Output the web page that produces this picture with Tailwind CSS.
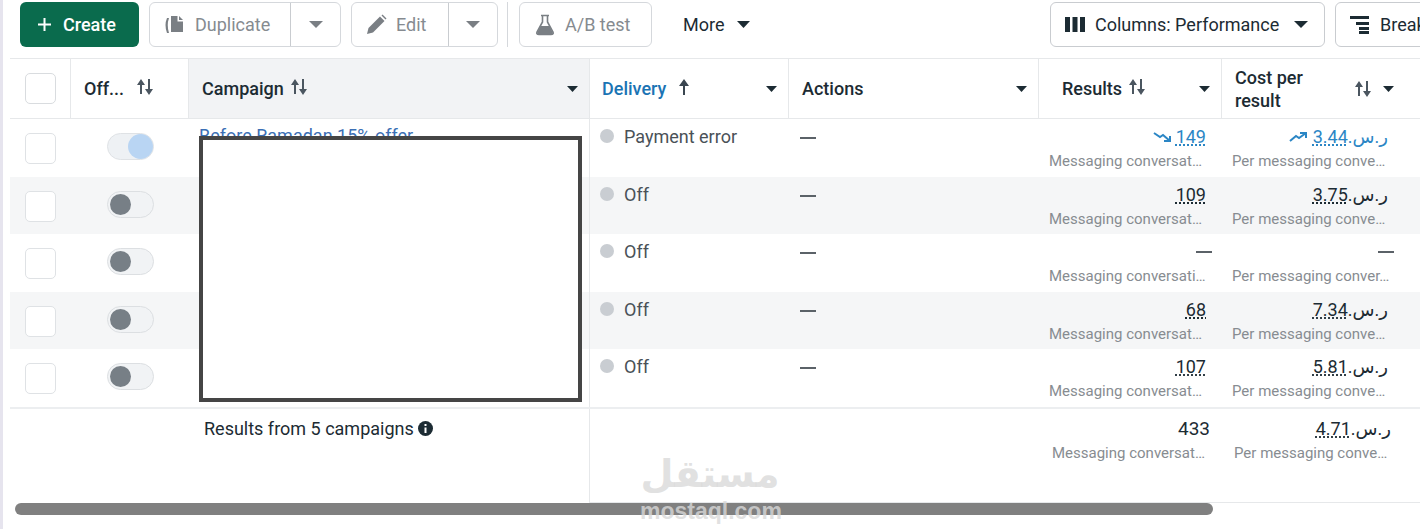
<!DOCTYPE html>
<html lang="en">
  <head>
    <meta charset="UTF-8" />
    <title>Campaigns</title>
    <script src="https://cdn.jsdelivr.net/npm/@tailwindcss/browser@4"></script>
  </head>
  <body class="bg-white">
    <div class="relative w-[1420px] h-[529px] overflow-hidden bg-white font-['Roboto','DejaVu_Sans',sans-serif] text-[#1c2b33] text-[18px] border-l-[3px] border-[#e6e4ee]">
      <!-- toolbar -->
      <div class="flex items-center h-[58px] pl-[17px] pb-[9px] gap-[10px] whitespace-nowrap">
        <button class="flex items-center gap-[11px] w-[119px] h-[45px] pl-[17px] rounded-[6px] bg-[#0a6b4d] text-white font-medium">
          <svg width="15" height="15" viewBox="0 0 15 15"><path d="M7.5 1v13M1 7.5h13" stroke="#fff" stroke-width="2"/></svg>
          Create
        </button>
        <div class="flex h-[45px] w-[192px] rounded-[6px] border border-[#d5d8dc] text-[#868b90]">
          <div class="flex items-center gap-[8px] w-[141px] pl-[13px] border-r border-[#c9ccd0]">
            <svg width="24" height="20" viewBox="0 0 24 20" fill="#7a7f84"><path d="M4 3 Q1 10 4 18 L6 18 Q3.500 10 6 3Z"/><path d="M8 1h6.500v5.500H20V17H8Z"/><path d="M16 1l4 4h-4Z"/></svg>
            Duplicate
          </div>
          <div class="flex items-center justify-center flex-1">
            <svg width="14" height="7" viewBox="0 0 14 7" fill="#7a7f84"><path d="M0 0h14L7 7Z"/></svg>
          </div>
        </div>
        <div class="flex h-[45px] w-[147px] rounded-[6px] border border-[#d5d8dc] text-[#868b90]">
          <div class="flex items-center gap-[9px] w-[97px] pl-[14px] border-r border-[#c9ccd0]">
            <svg width="21" height="21" viewBox="0 0 21 21" fill="#7a7f84"><path d="M1 20l1.500-6L14 2.500l4.500 4.500L7 18.500Z"/><path d="M15.500 1.500l1-1 4 4-1 1Z"/></svg>
            Edit
          </div>
          <div class="flex items-center justify-center flex-1">
            <svg width="14" height="7" viewBox="0 0 14 7" fill="#7a7f84"><path d="M0 0h14L7 7Z"/></svg>
          </div>
        </div>
        <div class="w-px h-[45px] bg-[#d5d8dc] ml-[-1px]"></div>
        <div class="flex items-center gap-[10px] h-[45px] w-[133px] ml-[1px] pl-[15px] rounded-[6px] border border-[#d5d8dc] text-[#868b90]">
          <svg width="20" height="22" viewBox="0 0 20 22" fill="none"><path d="M6 1.500h8M7.500 2v6L2 18q-1 2.500 2 2.500h12q3 0 2-2.500L12.500 8V2" stroke="#7a7f84" stroke-width="1.600"/><path d="M5.500 12h9L18 19q0 1.500-2 1.500H4Q2 20.500 2 19Z" fill="#7a7f84"/></svg>
          A/B test
        </div>
        <div class="flex items-center gap-[13px] ml-[21px]">
          More
          <svg width="13" height="7" viewBox="0 0 13 7" fill="#1c2b33"><path d="M0 0h13L6.500 7Z"/></svg>
        </div>
        <div class="flex items-center gap-[10px] h-[45px] w-[275px] ml-auto pl-[14px] rounded-[6px] border border-[#c9ccd0] shrink-0">
          <svg width="20" height="15" viewBox="0 0 20 15" fill="#1c2b33"><path d="M0 0h5v15H0zM7.500 0h5v15h-5zM15 0h5v15h-5z"/></svg>
          Columns: Performance
          <svg class="ml-[5px]" width="14" height="7" viewBox="0 0 14 7" fill="#1c2b33"><path d="M0 0h14L7 7Z"/></svg>
        </div>
        <div class="flex items-center gap-[11px] h-[45px] w-[100px] mr-[-15px] pl-[14px] rounded-[6px] border border-[#c9ccd0] shrink-0 overflow-hidden">
          <svg class="shrink-0" width="19" height="18" viewBox="0 0 19 18" fill="#1c2b33"><path d="M0 0h19v3H0zM6 6h13v3H6zM9 11h10v3H9zM9 15h10v3H9z"/></svg>
          Breakdown
        </div>
      </div>

      <!-- table header -->
      <div class="ml-[7px] grid grid-cols-[61px_118px_401px_199px_250px_183px_198px] h-[61px] border-y border-[#e6e8ea] font-medium text-[#1c2b33]">
        <div class="flex items-center pl-[15px] border-r border-[#e6e8ea]">
          <div class="w-[31px] h-[31px] rounded-[5px] border border-[#d9dcdf] bg-white"></div>
        </div>
        <div class="flex items-center gap-[12px] pl-[13px] border-r border-[#e6e8ea]">
          Off...
          <svg class="mb-[3px]" width="18" height="16" viewBox="0 0 18 16" fill="#4b5660"><path d="M4 15V5H6V15ZM5 0 9 6H1ZM12 0H14V10H12ZM13 16 9 10H17Z"/></svg>
        </div>
        <div class="flex items-center gap-[6px] pl-[13px] pr-[11px] bg-[#f2f3f5] border-r border-[#e6e8ea]">
          Campaign
          <svg class="mb-[3px]" width="18" height="16" viewBox="0 0 18 16" fill="#4b5660"><path d="M4 15V5H6V15ZM5 0 9 6H1ZM12 0H14V10H12ZM13 16 9 10H17Z"/></svg>
          <svg class="ml-auto" width="11" height="6" viewBox="0 0 11 6" fill="#1c2b33"><path d="M0 0h11L5.500 6Z"/></svg>
        </div>
        <div class="flex items-center gap-[12px] pl-[12px] pr-[11px] text-[#1b74b4] border-r border-[#e6e8ea]">
          Delivery
          <svg class="mb-[3px]" width="12" height="16" viewBox="0 0 12 16" fill="#3a4650"><path d="M5 16V5H7V16ZM6 0 11 7H1Z"/></svg>
          <svg class="ml-auto" width="11" height="6" viewBox="0 0 11 6" fill="#1c2b33"><path d="M0 0h11L5.500 6Z"/></svg>
        </div>
        <div class="flex items-center pl-[13px] pr-[11px] border-r border-[#e6e8ea]">
          Actions
          <svg class="ml-auto" width="11" height="6" viewBox="0 0 11 6" fill="#1c2b33"><path d="M0 0h11L5.500 6Z"/></svg>
        </div>
        <div class="flex items-center gap-[6px] pl-[23px] pr-[11px] border-r border-[#e6e8ea]">
          Results
          <svg class="mb-[3px]" width="18" height="16" viewBox="0 0 18 16" fill="#4b5660"><path d="M4 15V5H6V15ZM5 0 9 6H1ZM12 0H14V10H12ZM13 16 9 10H17Z"/></svg>
          <svg class="ml-auto" width="11" height="6" viewBox="0 0 11 6" fill="#1c2b33"><path d="M0 0h11L5.500 6Z"/></svg>
        </div>
        <div class="flex items-center pl-[13px] pr-[26px] leading-[23px]">
          <span>Cost per<br />result</span>
          <svg class="ml-auto mr-[11px]" width="18" height="16" viewBox="0 0 18 16" fill="#4b5660"><path d="M4 15V5H6V15ZM5 0 9 6H1ZM12 0H14V10H12ZM13 16 9 10H17Z"/></svg>
          <svg width="11" height="6" viewBox="0 0 11 6" fill="#1c2b33"><path d="M0 0h11L5.500 6Z"/></svg>
        </div>
      </div>

      <!-- rows -->
      <div id="rows" class="ml-[7px]"></div>

      <!-- summary -->
      <div class="ml-[7px] grid grid-cols-[61px_118px_401px_199px_250px_183px_198px] h-[96px] border-t-2 border-[#eceef0]">
        <div></div>
        <div></div>
        <div class="pl-[15px] pt-[6px] border-r border-[#e6e8ea]">
          <div class="flex items-center gap-[4px] h-[27px]">
            Results from 5 campaigns
            <svg width="15" height="15" viewBox="0 0 15 15"><circle cx="7.500" cy="7.500" r="7.500" fill="#1c2b33"/><path d="M6.500 6.500h2v5.500h-2zM6.500 3h2v2h-2z" fill="#fff"/></svg>
          </div>
        </div>
        <div class="border-b border-[#e6e8ea]"></div>
        <div class="border-b border-[#e6e8ea]"></div>
        <div class="pt-[8px] pr-[12px] pl-[13px] border-b border-[#e6e8ea]">
          <div class="leading-[24px] text-[19px] text-right">433</div>
          <div class="leading-[24px] text-[15px] text-[#878c91] whitespace-nowrap">Messaging conversat…</div>
        </div>
        <div class="pt-[8px] pr-[29px] pl-[12px] border-b border-[#e6e8ea]">
          <div class="flex justify-end items-baseline leading-[24px]"><span class="underline decoration-dotted underline-offset-2">4.71</span><span dir="rtl">ر.س.</span></div>
          <div class="leading-[24px] text-[15px] text-[#878c91] whitespace-nowrap">Per messaging conve…</div>
        </div>
      </div>

      <!-- redacted campaign names -->
      <a class="absolute left-[196px] top-[122px] text-[#3b6fb5] underline">Before Ramadan 15% offer</a>
      <div class="absolute left-[196px] top-[136px] w-[383px] h-[266px] bg-white border-[4px] border-[#454545]"></div>

      <!-- horizontal scrollbar -->
      <div class="absolute left-[12px] top-[503px] w-[1198px] h-[12px] rounded-full bg-[#808080]"></div>

      <!-- watermark -->
      <div class="absolute left-[637px] top-[446px] w-[140px] text-center text-[#d9d9d9]/80 font-bold pointer-events-none">
        <div class="font-['DejaVu_Sans',sans-serif] text-[38px] leading-[56px]">مستقل</div>
        <div class="font-['Liberation_Sans',sans-serif] text-[23px] leading-[18px]">mostaql.com</div>
      </div>
    </div>

    <script>
      const rows = [
        { status: "Payment error", on: true, res: "149", cost: "3.44", blue: true, resLabel: "Messaging conversat…", costLabel: "Per messaging conve…" },
        { status: "Off", res: "109", cost: "3.75", resLabel: "Messaging conversat…", costLabel: "Per messaging conve…" },
        { status: "Off", res: "", cost: "", resLabel: "Messaging conversati…", costLabel: "Per messaging conver…" },
        { status: "Off", res: "68", cost: "7.34", resLabel: "Messaging conversat…", costLabel: "Per messaging conve…" },
        { status: "Off", res: "107", cost: "5.81", resLabel: "Messaging conversat…", costLabel: "Per messaging conve…" },
      ];

      const dash = '<span class="inline-block w-[16px] h-[2px] bg-[#5b6268] align-middle"></span>';

      document.getElementById("rows").innerHTML = rows.map((r, i) => `
        <div class="grid grid-cols-[61px_118px_401px_199px_250px_183px_198px] h-[57.5px] ${i % 2 ? "bg-[#f5f6f7]" : "bg-white"}">
          <div class="pl-[15px] pt-[14px]">
            <div class="w-[31px] h-[31px] rounded-[5px] border border-[#dfe2e5] bg-white"></div>
          </div>
          <div class="pl-[36px] pt-[14px]">
            ${r.on
              ? `<div class="flex justify-end w-[47px] h-[27px] rounded-full bg-[#eef1f4] border border-[#dfe2e5]"><div class="w-[25px] h-[25px] rounded-full bg-[#b9d5f3]"></div></div>`
              : `<div class="flex items-center w-[47px] h-[27px] pl-[2px] rounded-full bg-[#f1f3f5] border border-[#dcdfe2]"><div class="w-[21px] h-[21px] rounded-full bg-[#777f86]"></div></div>`}
          </div>
          <div class="border-r border-[#e6e8ea]"></div>
          <div class="flex items-start gap-[10px] pl-[10px] pt-[6px] leading-[24px] text-[#4a5157]">
            <span class="w-[14px] h-[14px] mt-[4px] rounded-full bg-[#c9cdd2]"></span>${r.status}
          </div>
          <div class="pl-[11px] pt-[6px] leading-[24px]">${dash}</div>
          <div class="pt-[6px] pr-[16px] pl-[10px]">
            <div class="flex justify-end items-center h-[24px] leading-[24px] ${r.blue ? "text-[#2b86c5]" : ""} ${r.res ? "" : "mr-[-6px]"}">
              ${r.blue ? '<svg class="mr-[4px]" width="19" height="10" viewBox="0 0 19 10" fill="none" stroke="#2b86c5" stroke-width="2"><path d="M1 1l6 4 3-2 7 6M11 9h6V4"/></svg>' : ""}
              ${r.res ? `<span class="underline decoration-dotted underline-offset-2">${r.res}</span>` : dash}
            </div>
            <div class="leading-[24px] text-[15px] text-[#878c91] whitespace-nowrap">${r.resLabel}</div>
          </div>
          <div class="pt-[6px] pr-[32px] pl-[10px]">
            <div class="flex justify-end items-center h-[24px] leading-[24px] ${r.blue ? "text-[#2b86c5]" : ""} ${r.cost ? "" : "mr-[-6px]"}">
              ${r.blue ? '<svg class="mr-[5px]" width="19" height="10" viewBox="0 0 19 10" fill="none" stroke="#2b86c5" stroke-width="2"><path d="M1 9l6-5 3 2 7-5M11 1h6v5"/></svg>' : ""}
              ${r.cost ? `<span class="underline decoration-dotted underline-offset-2">${r.cost}</span><span dir="rtl">ر.س.</span>` : dash}
            </div>
            <div class="leading-[24px] text-[15px] text-[#878c91] whitespace-nowrap">${r.costLabel}</div>
          </div>
        </div>`).join("");
    </script>
  </body>
</html>
